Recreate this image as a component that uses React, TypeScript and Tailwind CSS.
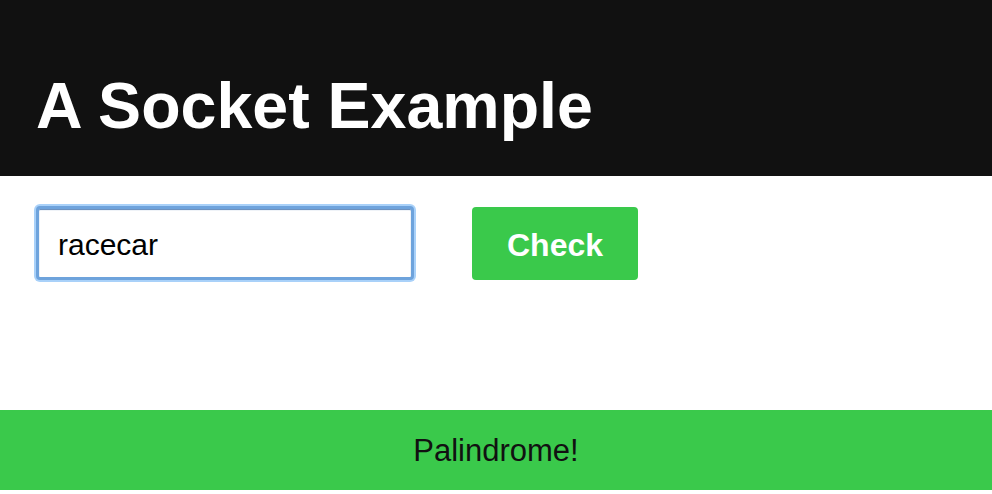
import React, { useState } from "react";

export default function App() {
  const [word, setWord] = useState("racecar");
  const isPalindrome = word === word.split("").reverse().join("");

  return (
    <div className="min-h-screen bg-white font-['Liberation_Sans',Arial,sans-serif]">
      {/* Header */}
      <header className="h-[176px] bg-[#111111] px-[36px] pt-[74px]">
        <h1 className="text-[64.5px] font-bold leading-[64px] text-white">A Socket Example</h1>
      </header>

      {/* Form */}
      <main className="h-[234px] px-[36px] pt-[30px]">
        <div className="flex items-center gap-[58px]">
          <input
            value={word}
            onChange={(e) => setWord(e.target.value)}
            className="h-[74px] w-[378px] rounded-[4px] border-[3px] border-[#6ea3dc] bg-white pl-[19px] pt-[3px] text-[30px] text-black shadow-[0_0_0_2px_#a9d1f9,inset_0_1px_1px_#5d86b8] outline-none"
          />
          <button className="h-[73px] w-[166px] rounded-[4px] bg-[#3ac94b] pt-[3px] text-[32px] font-bold text-white">
            Check
          </button>
        </div>
      </main>

      {/* Result */}
      <footer className="flex h-[80px] items-center justify-center bg-[#3ac94b]">
        <p className="text-[31px] leading-none text-[#111111]">
          {isPalindrome ? "Palindrome!" : "Not a palindrome"}
        </p>
      </footer>
    </div>
  );
}
